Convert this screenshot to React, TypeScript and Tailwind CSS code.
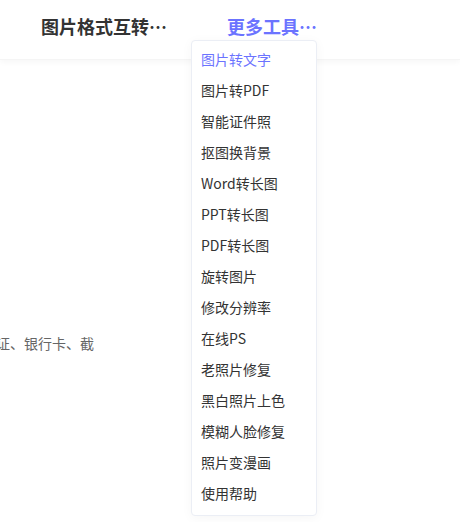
const tools = [
  "图片转文字",
  "图片转PDF",
  "智能证件照",
  "抠图换背景",
  "Word转长图",
  "PPT转长图",
  "PDF转长图",
  "旋转图片",
  "修改分辨率",
  "在线PS",
  "老照片修复",
  "黑白照片上色",
  "模糊人脸修复",
  "照片变漫画",
  "使用帮助",
];

const App = () => {
  return (
    <div
      className="relative w-[460px] h-[522px] overflow-hidden bg-white"
      style={{ fontFamily: '"Noto Sans CJK SC", "Noto Sans", sans-serif' }}
    >
      <header className="h-[60px] flex items-center shadow-[0_2px_6px_rgba(0,0,0,0.04)] border-b border-[#f5f5f5]">
        <h1 className="ml-[41px] text-[18px] font-bold text-[#333] leading-none -mt-2">
          图片格式互转…
        </h1>
        <span className="ml-[60px] text-[18px] font-bold text-[#6b73ff] leading-none -mt-2">
          更多工具…
        </span>
      </header>

      <div className="pt-[273px] pl-0">
        <p className="-ml-[4px] text-[14px] text-[#666] leading-[20px]">证、银行卡、截</p>
      </div>

      <ul className="absolute left-[191px] top-[40px] w-[126px] pt-[2.5px] pb-[6.5px] bg-white border border-[#ebeef5] rounded-[4px] shadow-[0_2px_12px_rgba(0,0,0,0.04)]">
        {tools.map((tool, i) => (
          <li
            key={tool}
            className={`h-[31px] leading-[31px] pl-[9px] text-[14px] whitespace-nowrap ${
              i === 0 ? "text-[#6b73ff]" : "text-[#333]"
            }`}
          >
            {tool}
          </li>
        ))}
      </ul>
    </div>
  );
};

export default App;
